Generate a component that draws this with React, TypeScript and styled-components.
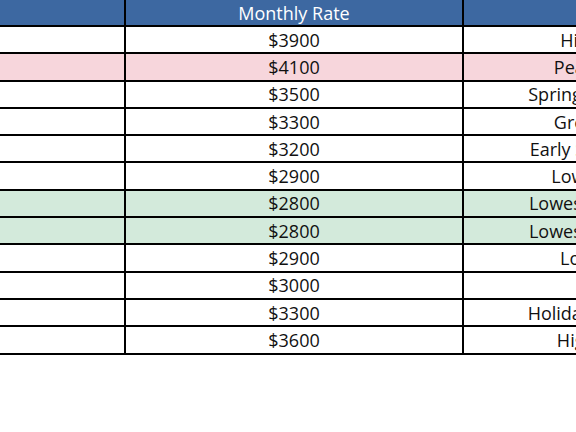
import React from 'react';
import styled, { createGlobalStyle } from 'styled-components';

const GlobalStyle = createGlobalStyle`
  html, body {
    margin: 0;
    padding: 0;
    background: #ffffff;
    overflow: hidden;
  }
  body {
    font-family: 'Open Sans', 'Liberation Sans', sans-serif;
  }
`;

const Page = styled.div`
  width: 576px;
  height: 432px;
  overflow: hidden;
  background: #ffffff;
`;

const Table = styled.table`
  border-collapse: collapse;
  table-layout: fixed;
  width: 1034px;
  margin: -2px 0 0 -234px;
  font-size: 18px;
  color: #111111;
`;

const HeadCell = styled.th`
  height: 25px;
  padding: 0;
  border: 2px solid #000000;
  background: #3d68a1;
  color: #ffffff;
  font-weight: 400;
  text-align: center;
  white-space: nowrap;
  line-height: 1;
`;

type Tone = 'plain' | 'peak' | 'low';

const toneColors: Record<Tone, string> = {
  plain: '#ffffff',
  peak: '#f7d6dc',
  low: '#d3eadb',
};

const Row = styled.tr<{ $tone: Tone }>`
  background: ${(p) => toneColors[p.$tone]};
`;

const Cell = styled.td`
  height: 25.3px;
  padding: 0;
  border: 2px solid #000000;
  text-align: center;
  white-space: nowrap;
  overflow: hidden;
  line-height: 1;
`;

const rows: { month: string; rate: number; note: string; tone: Tone }[] = [
  { month: 'January', rate: 3900, note: 'High Ski Demand', tone: 'plain' },
  { month: 'February', rate: 4100, note: 'Peak Season Rates', tone: 'peak' },
  { month: 'March', rate: 3500, note: 'Spring Break Travel Peak', tone: 'plain' },
  { month: 'April', rate: 3300, note: 'Great Spring Value', tone: 'plain' },
  { month: 'May', rate: 3200, note: 'Early Summer Discounts', tone: 'plain' },
  { month: 'June', rate: 2900, note: 'Low Summer Rates', tone: 'plain' },
  { month: 'July', rate: 2800, note: 'Lowest Rates of the Year', tone: 'low' },
  { month: 'August', rate: 2800, note: 'Lowest Rates of the Year', tone: 'low' },
  { month: 'September', rate: 2900, note: 'Low Fall Demand', tone: 'plain' },
  { month: 'October', rate: 3000, note: 'Fall Foliage', tone: 'plain' },
  { month: 'November', rate: 3300, note: 'Holiday Travel Rate Rises', tone: 'plain' },
  { month: 'December', rate: 3600, note: 'High Winter Rates', tone: 'plain' },
];

const App = () => {
  return (
    <>
      <GlobalStyle />
      <Page>
        <Table>
          <colgroup>
            <col style={{ width: 358 }} />
            <col style={{ width: 338 }} />
            <col style={{ width: 338 }} />
          </colgroup>
          <thead>
            <tr>
              <HeadCell>Month</HeadCell>
              <HeadCell>Monthly Rate</HeadCell>
              <HeadCell>Notes</HeadCell>
            </tr>
          </thead>
          <tbody>
            {rows.map((r) => (
              <Row key={r.month} $tone={r.tone}>
                <Cell>{r.month}</Cell>
                <Cell>${r.rate}</Cell>
                <Cell>{r.note}</Cell>
              </Row>
            ))}
          </tbody>
        </Table>
      </Page>
    </>
  );
};

export default App;
